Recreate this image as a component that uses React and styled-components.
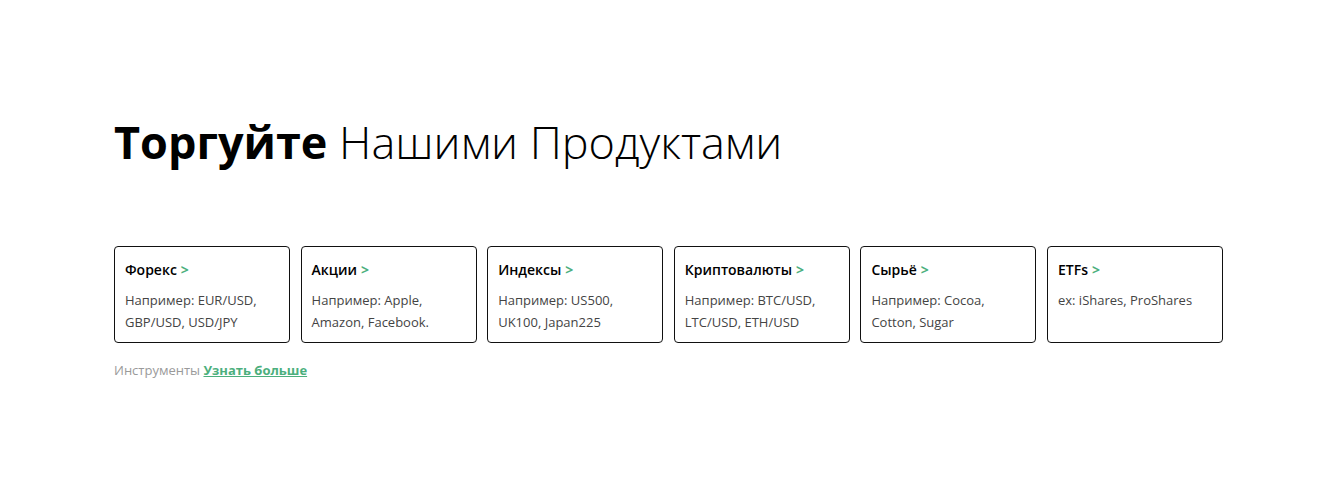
import React from 'react'
import styled, { createGlobalStyle } from 'styled-components'

const GlobalStyle = createGlobalStyle`
    body {
        margin: 0;
        background: #fff;
        font-family: "Open Sans", "Noto Sans", sans-serif;
    }
`;

const Section = styled.section`
    padding: 111px 0 0 114px;
    height: 488px;
    box-sizing: border-box;
`;

const Title = styled.h2`
    margin: 0;
    font-size: 45px;
    line-height: 62px;
    font-weight: 300;
    color: #000;

    b {
        font-weight: 700;
    }
`;

const Grid = styled.div`
    display: grid;
    grid-template-columns: repeat(6, 176px);
    column-gap: 10.6px;
    margin-top: 73px;
`;

const Card = styled.a`
    display: block;
    height: 97px;
    box-sizing: border-box;
    border: 1px solid #111;
    border-radius: 4px;
    padding: 13px 10px 0;
    color: inherit;
    text-decoration: none;
`;

const CardTitle = styled.div`
    font-size: 14px;
    font-weight: 600;
    color: #000;
    line-height: 20px;
`;

const Arrow = styled.span`
    color: #4caf7d;
    font-weight: 700;
    margin-left: 4px;
`;

const CardText = styled.p`
    margin: 9px 0 0;
    font-size: 13px;
    line-height: 22px;
    color: #444;
`;

const Footer = styled.p`
    margin: 18px 0 0;
    font-size: 13px;
    color: #9a9a9a;
`;

const More = styled.a`
    color: #4caf7d;
    font-weight: 700;
    text-decoration: underline;
`;

const products = [
    { name: 'Форекс', text: 'Например: EUR/USD, GBP/USD, USD/JPY' },
    { name: 'Акции', text: 'Например: Apple, Amazon, Facebook.' },
    { name: 'Индексы', text: 'Например: US500, UK100, Japan225' },
    { name: 'Криптовалюты', text: 'Например: BTC/USD, LTC/USD, ETH/USD' },
    { name: 'Сырьё', text: 'Например: Cocoa, Cotton, Sugar' },
    { name: 'ETFs', text: 'ex: iShares, ProShares' },
];

const App = () => {
    return (
        <>
            <GlobalStyle />
            <Section>
                <Title><b>Торгуйте</b> Нашими Продуктами</Title>
                <Grid>
                    {products.map((p) => (
                        <Card key={p.name} href="#">
                            <CardTitle>{p.name}<Arrow>&gt;</Arrow></CardTitle>
                            <CardText>{p.text}</CardText>
                        </Card>
                    ))}
                </Grid>
                <Footer>Инструменты <More href="#">Узнать больше</More></Footer>
            </Section>
        </>
    )
}

export default App
